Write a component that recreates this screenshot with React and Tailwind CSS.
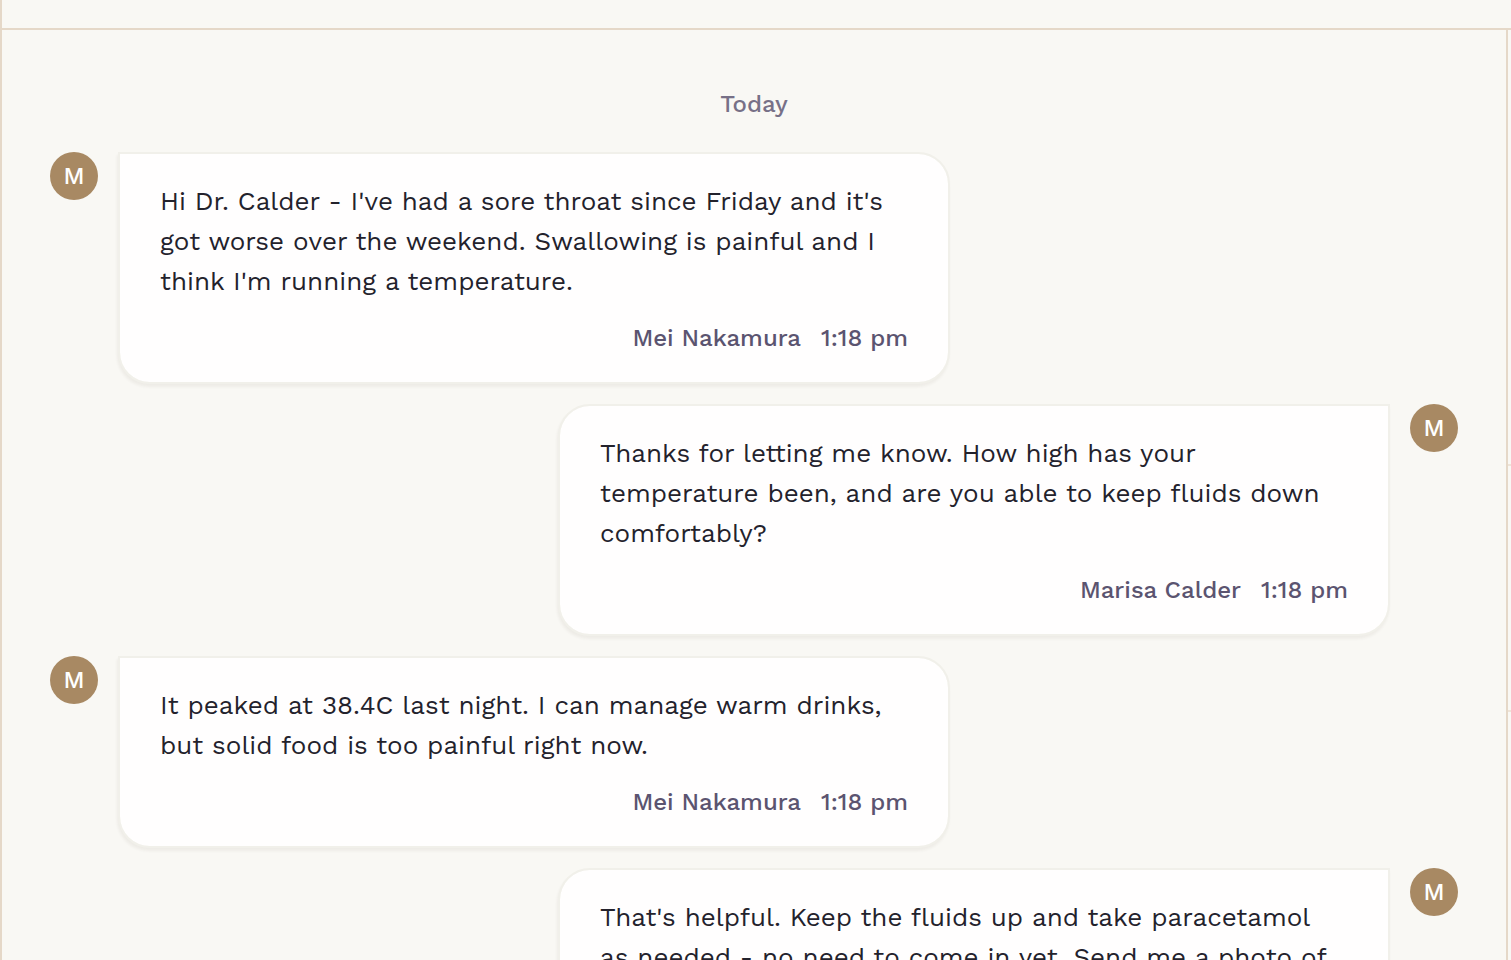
import React from "react";

const messages = [
  {
    id: 1,
    mine: false,
    name: "Mei Nakamura",
    time: "1:18 pm",
    text: "Hi Dr. Calder - I've had a sore throat since Friday and it's\ngot worse over the weekend. Swallowing is painful and I\nthink I'm running a temperature.",
  },
  {
    id: 2,
    mine: true,
    name: "Marisa Calder",
    time: "1:18 pm",
    text: "Thanks for letting me know. How high has your\ntemperature been, and are you able to keep fluids down\ncomfortably?",
  },
  {
    id: 3,
    mine: false,
    name: "Mei Nakamura",
    time: "1:18 pm",
    text: "It peaked at 38.4C last night. I can manage warm drinks,\nbut solid food is too painful right now.",
  },
  {
    id: 4,
    mine: true,
    text: "That's helpful. Keep the fluids up and take paracetamol\nas needed - no need to come in yet. Send me a photo of",
  },
];

function Message({ message }) {
  const { mine, name, time, text } = message;
  return (
    <li className={`flex items-start gap-5 ${mine ? "flex-row-reverse" : ""}`}>
      <span className="flex size-12 shrink-0 items-center justify-center rounded-full bg-[#a88963] font-['Inter',sans-serif] text-[22px] font-medium text-white">
        M
      </span>
      <article
        className={`max-w-[832px] min-w-0 flex-1 rounded-b-[32px] border-2 border-[#f1f0ea] bg-[#fffefe] bg-clip-padding px-10 pt-[27px] pb-7 shadow-[-1px_3px_3px_rgba(60,55,30,0.06)] ${
          mine ? "rounded-tl-[32px]" : "rounded-tr-[32px]"
        }`}
      >
        <p className="text-[26px] leading-10 whitespace-pre-line text-[#23222c]">{text}</p>
        {name && (
          <footer className="mt-[21px] flex justify-end gap-5 text-2xl leading-8 font-medium text-[#5b5470]">
            <span>{name}</span>
            <time>{time}</time>
          </footer>
        )}
      </article>
    </li>
  );
}

export default function App() {
  return (
    <div className="flex h-screen flex-col overflow-hidden border-l-2 border-[#e5d8c8] bg-[#f9f8f4] font-['Work_Sans','Inter',sans-serif]">
      <header className="h-[30px] shrink-0 border-b-2 border-[#e5d8c8]" />
      <div className="flex min-h-0 flex-1">
        <main className="min-w-0 flex-1 overflow-hidden px-12 pt-[58px]">
          <h2 className="text-center text-2xl leading-8 font-medium text-[#777087]">Today</h2>
          <ol className="mt-8 flex flex-col gap-5">
            {messages.map((message) => (
              <Message key={message.id} message={message} />
            ))}
          </ol>
        </main>
        <aside className="flex w-[5px] shrink-0 flex-col border-l-2 border-[#e5d8c8]">
          <div className="h-[436px] border-b-2 border-[#eee4d8]" />
          <div className="h-[246px] border-b-2 border-[#eee4d8]" />
        </aside>
      </div>
    </div>
  );
}
